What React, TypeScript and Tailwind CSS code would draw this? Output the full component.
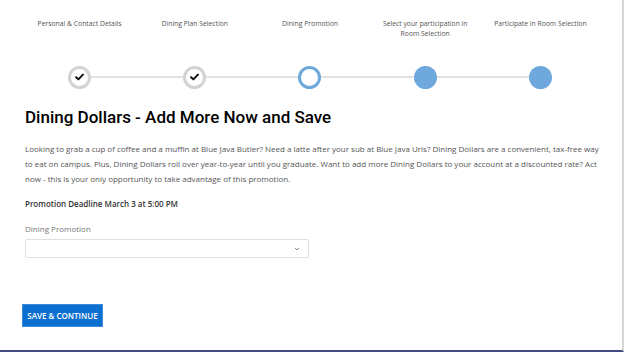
import React from 'react';

const steps = [
  { label: 'Personal & Contact Details', state: 'done' },
  { label: 'Dining Plan Selection', state: 'done' },
  { label: 'Dining Promotion', state: 'current' },
  { label: 'Select your participation in Room Selection', state: 'todo' },
  { label: 'Participate in Room Selection', state: 'todo' },
];

const Check = () => (
  <svg width="9" height="8" viewBox="0 0 10 8">
    <path d="M1.2 4.2 L3.8 6.6 L8.8 1.4" fill="none" stroke="#111" strokeWidth="2.2" strokeLinecap="round" strokeLinejoin="round" />
  </svg>
);

const StepDot = ({ state }: { state: string }) => {
  if (state === 'done') {
    return (
      <div className="w-[23px] h-[23px] rounded-full border-[3px] border-[#d3d3d3] bg-white flex items-center justify-center z-10">
        <Check />
      </div>
    );
  }
  if (state === 'current') {
    return <div className="w-[23px] h-[23px] rounded-full border-[3px] border-[#6fa8dc] bg-white z-10" />;
  }
  return <div className="w-[23px] h-[23px] rounded-full bg-[#6fa8dc] z-10" />;
};

export default function App() {
  return (
    <div className="w-[624px] h-[352px] bg-white border-r-[2px] border-r-[#d6d6d6] border-b-[2px] border-b-[#444a82] overflow-hidden font-['Open_Sans',sans-serif]">
      <div className="pl-[22px] pr-[24px]">
        <div className="grid grid-cols-5 pt-[19px] h-[62px]">
          {steps.map(s => (
            <div key={s.label} className="text-center text-[6.8px] leading-[10px] text-[#555] px-[6px]">
              {s.label}
            </div>
          ))}
        </div>
        <div className="relative grid grid-cols-5 h-[30px] items-center">
          <div className="absolute left-[10%] right-[10%] top-[14px] h-[2px] bg-[#e2e2e2]" />
          {steps.map(s => (
            <div key={s.label} className="flex justify-center">
              <StepDot state={s.state} />
            </div>
          ))}
        </div>
      </div>
      <div className="pl-[25px] pr-[20px]">
        <h1 className="mt-[13px] text-[17px] leading-[24px] font-medium text-black font-['Roboto',sans-serif]">
          Dining Dollars - Add More Now and Save
        </h1>
        <p className="mt-[12px] text-[8px] leading-[15px] text-[#555]">
          Looking to grab a cup of coffee and a muffin at Blue Java Butler? Need a latte after your sub at Blue Java Uris? Dining Dollars are a convenient, tax-free way to eat on campus. Plus, Dining Dollars roll over year-to-year until you graduate. Want to add more Dining Dollars to your account at a discounted rate? Act now - this is your only opportunity to take advantage of this promotion.
        </p>
        <p className="mt-[10px] text-[8px] leading-[15px] font-semibold text-[#333]">
          Promotion Deadline March 3 at 5:00 PM
        </p>
        <div className="mt-[12px] text-[8px] leading-[12px] text-[#777]">Dining Promotion</div>
        <div className="mt-[4px] w-[284px] h-[19px] border border-[#e0e0e0] rounded-[2px] flex items-center justify-end pr-[8px]">
          <svg width="6" height="4" viewBox="0 0 6 4">
            <path d="M0.8 0.8 L3 3 L5.2 0.8" fill="none" stroke="#8a8a8a" strokeWidth="1" />
          </svg>
        </div>
      </div>
      <div className="pl-[22px] mt-[46px]">
        <button className="h-[23px] w-[81px] bg-[#0b6fd0] border border-[#3b8be0] text-white text-[8px] font-semibold flex items-center justify-center">
          SAVE &amp; CONTINUE
        </button>
      </div>
    </div>
  );
}
